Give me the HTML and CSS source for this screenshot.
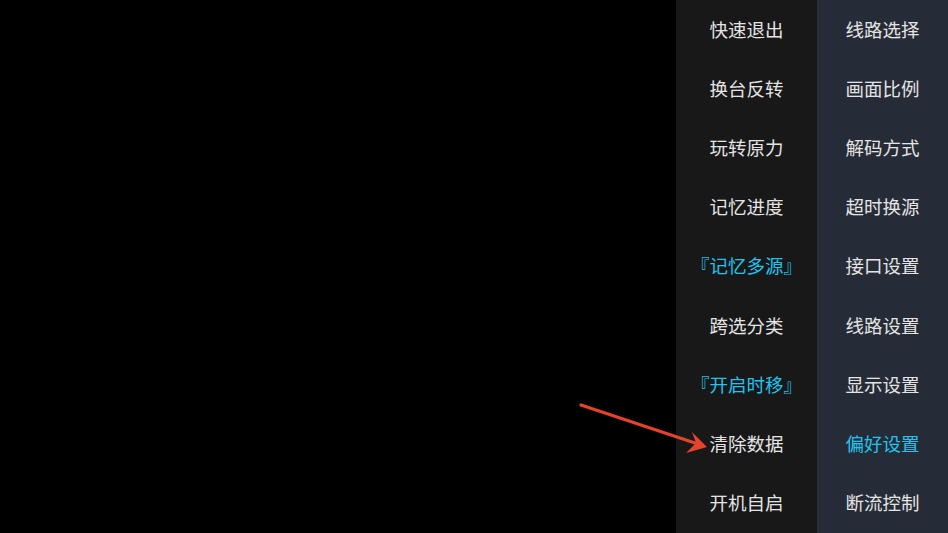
FILE: index.html
```html
<!DOCTYPE html>
<html lang="zh">
<head>
<meta charset="utf-8">
<link rel="stylesheet" href="styles.css">
</head>
<body>
<div class="screen">
  <div class="video"></div>
  <div class="col col-a">
    <div class="item">快速退出</div>
    <div class="item">换台反转</div>
    <div class="item">玩转原力</div>
    <div class="item">记忆进度</div>
    <div class="item active">『记忆多源』</div>
    <div class="item">跨选分类</div>
    <div class="item active">『开启时移』</div>
    <div class="item">清除数据</div>
    <div class="item">开机自启</div>
  </div>
  <div class="col col-b">
    <div class="item">线路选择</div>
    <div class="item">画面比例</div>
    <div class="item">解码方式</div>
    <div class="item">超时换源</div>
    <div class="item">接口设置</div>
    <div class="item">线路设置</div>
    <div class="item">显示设置</div>
    <div class="item active">偏好设置</div>
    <div class="item">断流控制</div>
  </div>
  <svg class="arrow" width="140" height="60" viewBox="0 0 140 60">
    <line x1="2" y1="6" x2="116" y2="44" stroke="#e5432b" stroke-width="3.2" stroke-linecap="round"/>
    <polygon points="128,48 113,33 117,44 107,54" fill="#e5432b"/>
  </svg>
</div>
</body>
</html>
```
FILE: styles.css
```css
html, body {
  margin: 0;
  padding: 0;
  background: #000;
}
.screen {
  position: relative;
  width: 948px;
  height: 533px;
  display: flex;
  background: #000;
  font-family: "Noto Sans CJK SC", "Noto Sans", sans-serif;
  overflow: hidden;
}
.video {
  flex: 1;
}
.col {
  display: grid;
  grid-template-rows: repeat(9, 1fr);
}
.col-a {
  width: 141px;
  background: #181818;
}
.col-b {
  width: 131px;
  background: #262c37;
}
.item {
  display: flex;
  align-items: center;
  justify-content: center;
  padding-bottom: 2px;
  color: #e4e4e4;
  font-size: 18.5px;
  white-space: nowrap;
}
.item.active {
  color: #20c4ee;
}
.arrow {
  position: absolute;
  left: 579px;
  top: 399px;
}
```
